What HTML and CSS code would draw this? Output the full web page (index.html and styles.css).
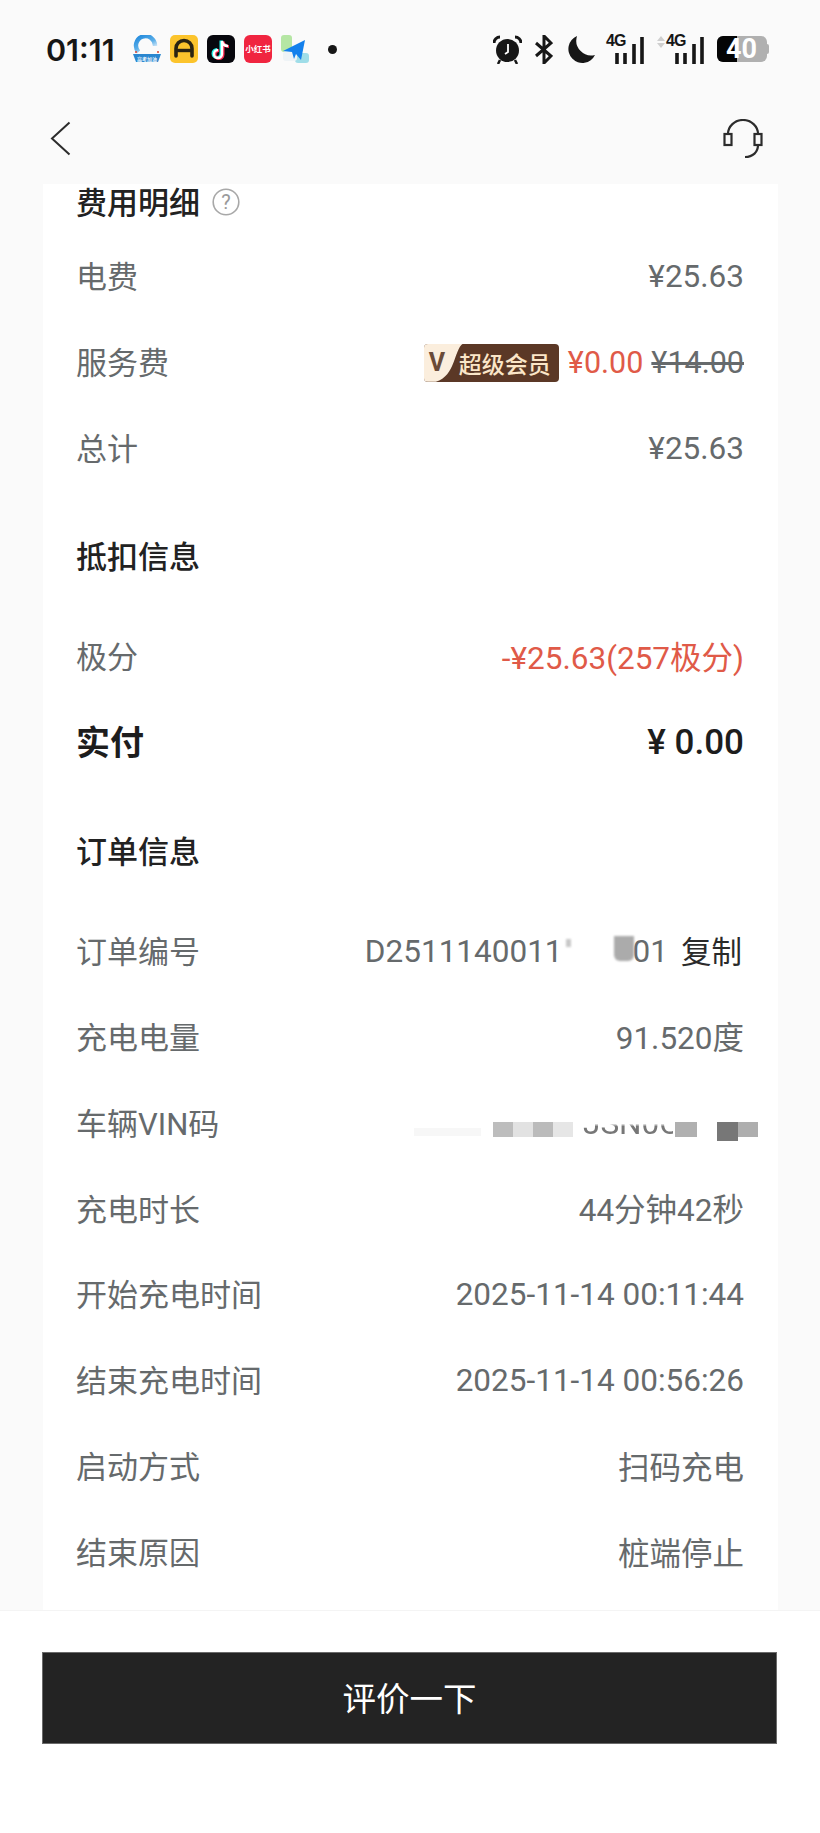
FILE: index.html
```html
<!DOCTYPE html>
<html lang="zh-CN">
<head>
<meta charset="utf-8">
<title>订单详情</title>
<link rel="stylesheet" href="styles.css">
</head>
<body>
<div class="page">
  <div class="statusbar">
    <span class="time">01:11</span>
    <div class="apps">
      <svg class="app" viewBox="0 0 28 28">
        <defs><linearGradient id="arc" x1="0" y1="0" x2="0.6" y2="1"><stop offset="0" stop-color="#1f88dc"/><stop offset="0.6" stop-color="#5aaee8"/><stop offset="1" stop-color="#e4f1fb"/></linearGradient></defs>
        <path d="M5.500 17A9.500 9.500 0 1 1 22 11" fill="none" stroke="url(#arc)" stroke-width="4.400"/>
        <path d="M0 19h28l-3 8H3z" fill="#2a86cf"/>
        <circle cx="3" cy="17" r="1" fill="#d8432f"/><circle cx="25" cy="17" r="1" fill="#d8432f"/>
        <text x="14" y="25.500" class="app-tiny">高考加油</text>
      </svg>
      <svg class="app" viewBox="0 0 28 28"><rect width="28" height="28" rx="5" fill="#fcc42c"/><path d="M6 21v-7.500a8 8 0 0 1 16 0V21" fill="none" stroke="#2a2412" stroke-width="3.600" stroke-linecap="round"/><path d="M6 15.500h16" stroke="#2a2412" stroke-width="3.400"/></svg>
      <svg class="app" viewBox="0 0 28 28"><rect width="28" height="28" rx="6" fill="#07070d"/><path d="M15 6v13a4 4 0 1 1-4-4M15 6c.5 3 2.500 5 6 5" fill="none" stroke="#25f4ee" stroke-width="3" transform="translate(-1 -.5)"/><path d="M15 6v13a4 4 0 1 1-4-4M15 6c.5 3 2.500 5 6 5" fill="none" stroke="#fe2c55" stroke-width="3" transform="translate(1 .5)"/><path d="M15 6v13a4 4 0 1 1-4-4M15 6c.5 3 2.500 5 6 5" fill="none" stroke="#fff" stroke-width="2.400"/></svg>
      <span class="app xhs">小红书</span>
      <svg class="app" viewBox="0 0 28 28"><rect x="0" y="0" width="11" height="17" rx="3" fill="#b5e6a4"/><rect x="14" y="18" width="14" height="10" rx="3" fill="#9fdde8"/><rect x="2" y="16" width="14" height="10" rx="3" fill="#eef3f6"/><path d="M2 16 24 5l-4 20-5-6-2 5-2-7z" fill="#1380ec"/></svg>
      <span class="dot"></span>
    </div>
    <div class="sys">
      <svg class="sys-alarm" viewBox="0 0 29 29"><circle cx="14.500" cy="15.500" r="11.500" fill="#161616"/><path d="M1 8a6 6 0 0 1 6-6M28 8a6 6 0 0 0-6-6" fill="none" stroke="#161616" stroke-width="3"/><path d="M7 25l-2 4M22 25l2 4" stroke="#161616" stroke-width="2.500"/><path d="M15 9v8l-3 2" fill="none" stroke="#fff" stroke-width="1.800"/></svg>
      <svg class="sys-bt" viewBox="0 0 18 29"><path d="M1 8l15 13-7 7V1l7 7L1 21" fill="none" stroke="#161616" stroke-width="3"/></svg>
      <svg class="sys-moon" viewBox="0 0 29 29"><path d="M11 1a14 14 0 1 0 18 19A15 15 0 0 1 11 1z" fill="#161616"/></svg>
      <div class="net">
        <span class="net-label">4G</span>
        <svg class="bars" viewBox="0 0 30 28"><path d="M3 17v11M11 17v11M20 8v20M28 1v27" stroke="#161616" stroke-width="3.600"/></svg>
      </div>
      <div class="net net-second">
        <svg class="updown" viewBox="0 0 8 12"><path d="M4 0l4 5H0zM4 12l4-5H0z" fill="#cfcfcf"/></svg>
        <span class="net-label">4G</span>
        <svg class="bars" viewBox="0 0 30 28"><path d="M3 17v11M11 17v11M20 8v20M28 1v27" stroke="#161616" stroke-width="3.600"/></svg>
      </div>
      <div class="battery"><span class="battery-fill"></span><span class="battery-num">40</span><span class="battery-cap"></span></div>
    </div>
  </div>

  <header class="nav">
    <svg class="back" viewBox="0 0 21 35"><path d="M19.500 1.500 2 17.500l17.500 16" fill="none" stroke="#2c2c2c" stroke-width="2"/></svg>
    <svg class="headset" viewBox="0 0 40 40"><path d="M5 15a15 14 0 0 1 30 0" fill="none" stroke="#2c2c2c" stroke-width="2.200"/><rect x="1.500" y="15" width="7" height="11" fill="none" stroke="#2c2c2c" stroke-width="2.200"/><rect x="31.500" y="15" width="7" height="11" fill="none" stroke="#2c2c2c" stroke-width="2.200"/><path d="M35 26c0 7-5 12-13 12" fill="none" stroke="#2c2c2c" stroke-width="2.200"/></svg>
  </header>

  <main class="card">
    <div class="title-top">
      <span class="title">费用明细</span>
      <svg class="help" viewBox="0 0 28 28"><circle cx="14" cy="14" r="12.800" fill="none" stroke="#a8a8a8" stroke-width="1.600"/><text x="14" y="21" class="help-mark">?</text></svg>
    </div>
    <div class="row"><span class="cjk">电费</span><span>¥25.63</span></div>
    <div class="row"><span class="cjk">服务费</span>
      <div class="fee">
        <span class="vip"><span class="vip-v">V</span><span class="vip-text">超级会员</span></span>
        <span class="red">¥0.00</span>
        <span class="old">¥14.00</span>
      </div>
    </div>
    <div class="row"><span class="cjk">总计</span><span>¥25.63</span></div>
    <div class="section section-first"><span class="title">抵扣信息</span></div>
    <div class="row"><span class="cjk">极分</span><span class="red cjk-value">-¥25.63(257极分)</span></div>
    <div class="row row-paid"><span class="cjk">实付</span><span class="paid-val">¥ 0.00</span></div>
    <div class="section"><span class="title">订单信息</span></div>
    <div class="row"><span class="cjk">订单编号</span>
      <div class="order">
        <span>D2511140011</span>
        <i class="mask-frag"></i>
        <i class="mask-order"></i>
        <span class="order-end">01</span>
        <span class="copy">复制</span>
      </div>
    </div>
    <div class="row"><span class="cjk">充电电量</span><span class="cjk-value">91.520度</span></div>
    <div class="row"><span class="cjk">车辆VIN码</span>
      <div class="vin">
        <i class="b b0"></i>
        <i class="b b1"></i><i class="b b2"></i><i class="b b3"></i><i class="b b4"></i>
        <span class="vin-text">JSN0C</span>
        <i class="b b5"></i><i class="b b6"></i><i class="b b7"></i>
      </div>
    </div>
    <div class="row"><span class="cjk">充电时长</span><span class="cjk-value">44分钟42秒</span></div>
    <div class="row"><span class="cjk">开始充电时间</span><span>2025-11-14 00:11:44</span></div>
    <div class="row"><span class="cjk">结束充电时间</span><span>2025-11-14 00:56:26</span></div>
    <div class="row"><span class="cjk">启动方式</span><span class="cjk-value">扫码充电</span></div>
    <div class="row"><span class="cjk">结束原因</span><span class="cjk-value">桩端停止</span></div>
  </main>

  <footer class="footer">
    <div class="btn">评价一下</div>
  </footer>
</div>
</body>
</html>
```

FILE: styles.css
```css
* { box-sizing: border-box; }
html, body { margin: 0; padding: 0; }
body {
  width: 820px;
  height: 1833px;
  overflow: hidden;
  background: #fafafa;
  font-family: Roboto, "Noto Sans CJK SC", sans-serif;
  color: #666a6c;
}
.page { display: flex; flex-direction: column; height: 1833px; }

.statusbar {
  height: 98px;
  flex: none;
  display: flex;
  align-items: center;
  padding: 0 53px 0 46px;
}
.time { font-family: Inter, Roboto, sans-serif; font-size: 30.500px; font-weight: 600; color: #161616; width: 87px; }
.apps { display: flex; align-items: center; gap: 9px; }
.app { width: 28px; height: 28px; display: block; flex: none; }
.app-tiny { font-family: "Noto Sans CJK SC", sans-serif; font-size: 5px; font-weight: 700; fill: #e8f4fc; text-anchor: middle; }
.xhs {
  background: #f02540;
  border-radius: 6px;
  color: #fff;
  font-size: 8.500px;
  font-weight: 700;
  line-height: 28px;
  text-align: center;
  white-space: nowrap;
}
.dot { width: 9px; height: 9px; border-radius: 50%; background: #161616; margin-left: 10px; }
.sys { margin-left: auto; display: flex; align-items: center; }
.sys-alarm { width: 29px; height: 29px; margin-right: 13px; }
.sys-bt { width: 18px; height: 29px; margin-right: 13px; }
.sys-moon { width: 29px; height: 29px; margin-right: 11px; }
.net { position: relative; width: 38px; height: 29px; margin-right: 13px; }
.net-second { width: 47px; }
.net-label {
  position: absolute;
  left: 0;
  top: -3px;
  font-family: "Liberation Sans", sans-serif;
  font-size: 16px;
  font-weight: 700;
  line-height: 18px;
  color: #161616;
  letter-spacing: -0.8px;
}
.net-second .net-label { left: 9px; }
.bars { position: absolute; right: 0; bottom: 0; width: 30px; height: 28px; }
.updown { position: absolute; left: 0; top: 1px; width: 8px; height: 12px; }
.battery {
  position: relative;
  width: 50px;
  height: 26px;
  background: #b0b0b0;
  border-radius: 6px;
}
.battery-fill {
  position: absolute;
  left: 0; top: 0; bottom: 0;
  width: 20px;
  background: #050505;
  border-radius: 6px 0 0 6px;
}
.battery-num {
  position: absolute;
  left: 9px;
  top: 0;
  font-size: 27px;
  font-weight: 700;
  line-height: 26px;
  color: #fff;
}
.battery-cap {
  position: absolute;
  right: -2px;
  top: 8px;
  width: 3px;
  height: 10px;
  background: #b0b0b0;
  border-radius: 0 2px 2px 0;
}

.nav {
  height: 86px;
  flex: none;
  display: flex;
  align-items: center;
  justify-content: space-between;
  padding: 0 57px 5px 50px;
}
.back { width: 21px; height: 35px; display: block; }
.headset { width: 40px; height: 40px; display: block; }

.card {
  flex: 1;
  min-height: 0;
  margin: 0 42px 0 43px;
  padding: 0 34px 0 33px;
  background: #fff;
  overflow: hidden;
  font-size: 31.500px;
}
.title-top { height: 36px; display: flex; align-items: center; gap: 12px; }
.title { font-size: 31px; font-weight: 500; color: #222; padding-bottom: 3px; }
.help { width: 28px; height: 28px; display: block; }
.help-mark { font-size: 20px; fill: #9a9a9a; text-anchor: middle; font-family: Roboto, sans-serif; }

.row {
  height: 85.900px;
  display: flex;
  align-items: center;
  justify-content: space-between;
  white-space: nowrap;
}
.cjk { font-size: 31px; padding-bottom: 4px; }
.cjk-value { padding-bottom: 4px; }
.title-top + .row { margin-top: 14px; }
.section { height: 85px; margin: 23px 0 15px; display: flex; align-items: center; }
.section-first { margin-top: 22px; }
.row-paid { color: #1d1d1d; font-weight: 600; }
.row-paid .cjk { font-size: 34px; }
.paid-val { font-size: 35px; font-weight: 500; }

.red { color: #e05a48; }
.fee { display: flex; align-items: center; gap: 8px; font-size: 30.500px; }
.old { text-decoration: line-through; }
.vip {
  position: relative;
  display: flex;
  height: 38px;
  width: 135px;
  margin-right: 1px;
  border-radius: 4px;
  background: #5b3826;
  align-items: center;
  padding-left: 35px;
}
.vip-v {
  position: absolute;
  left: 0;
  top: 0;
  width: 40px;
  height: 38px;
  padding-left: 5px;
  background: #fbeedd;
  color: #6a4b38;
  font-size: 25px;
  font-weight: 700;
  line-height: 38px;
  border-radius: 4px 0 0 4px;
  clip-path: path("M0 0H39C30 6 32 32 12 38H0Z");
}
.vip-text { font-size: 23px; font-weight: 500; color: #fbe6c8; white-space: nowrap; }

.order { display: flex; align-items: center; margin-right: 2px; }
.mask-frag {
  display: block;
  width: 5px;
  height: 8px;
  margin: -16px 0 0 3px;
  background: #c8c8c8;
  filter: blur(1px);
}
.mask-order {
  display: block;
  width: 20px;
  height: 25px;
  margin: -6px 0 0 43px;
  background: #ababab;
  border-radius: 0 0 6px 6px;
  filter: blur(1px);
}
.order-end { margin-left: -1px; }
.copy { color: #2a2a2a; margin-left: 13px; font-size: 30.500px; padding-bottom: 3px; }

.vin {
  display: flex;
  align-items: center;
  margin-right: -14px;
  height: 40px;
}
.b { display: block; width: 20px; height: 15px; flex: none; margin-top: 12px; filter: blur(.6px); }
.b0 { width: 67px; height: 8px; margin: 18px 12px 0 0; background: #f7f7f7; }
.b1 { background: #bdbdbd; }
.b2 { background: #e2e2e2; }
.b3 { background: #bbbbbb; }
.b4 { background: #e6e6e6; }
.b5 { background: #b0b0b0; width: 22px; margin-left: 2px; }
.b6 { background: #777; margin-left: 20px; height: 19px; margin-top: 16px; width: 21px; }
.b7 { background: #aeaeae; margin-top: 12px; }
.vin-text {
  display: block;
  width: 90px;
  margin-left: 10px;
  text-align: center;
  color: #777;
  -webkit-mask-image: linear-gradient(transparent 50%, #000 58%);
  mask-image: linear-gradient(transparent 50%, #000 58%);
}

.footer {
  flex: none;
  height: 223px;
  background: #fff;
  padding: 41px 43px 0 42px;
  border-top: 1px solid #f4f4f4;
}
.btn {
  height: 92px;
  background: #232323;
  border: 1px solid #6a6a6a;
  color: #fff;
  font-size: 33.500px;
  padding-bottom: 3px;
  display: flex;
  align-items: center;
  justify-content: center;
}
```
